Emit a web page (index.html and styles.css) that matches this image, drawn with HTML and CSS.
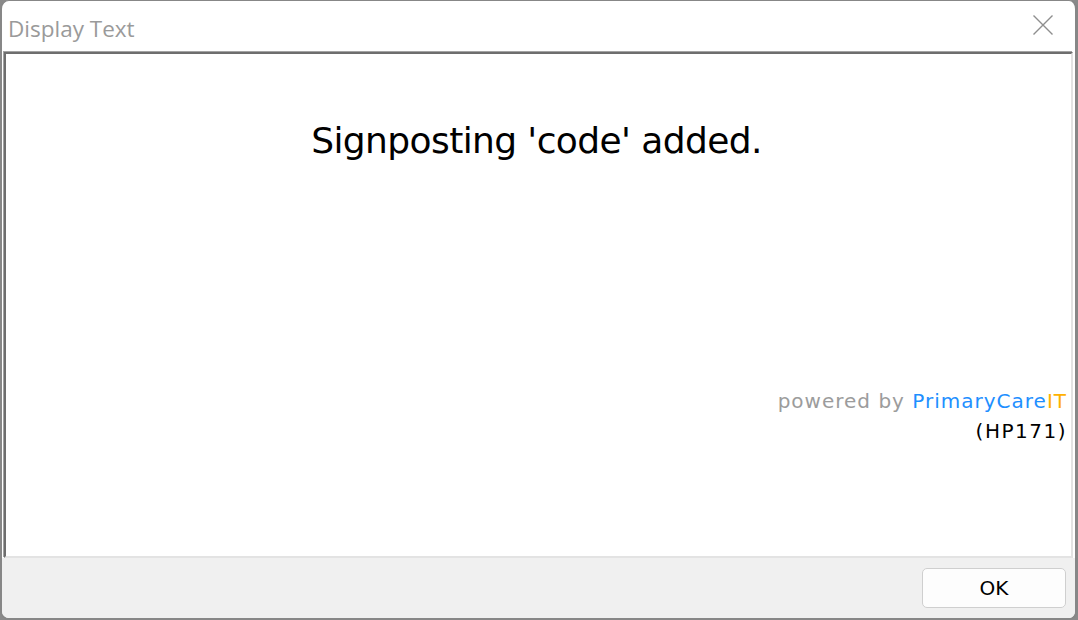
FILE: index.html
```html
<!DOCTYPE html>
<html>
<head>
<meta charset="utf-8">
<link rel="stylesheet" href="styles.css">
</head>
<body>
<div class="window">
  <div class="titlebar">
    <span class="title">Display Text</span>
    <svg class="close" width="20" height="20" viewBox="0 0 20 20"><path d="M0.5 0.5 L19.5 19.5 M19.5 0.5 L0.5 19.5" stroke="#8e8e8e" stroke-width="1.4" fill="none"/></svg>
  </div>
  <div class="panel">
    <div class="message">Signposting 'code' added.</div>
    <div class="powered">
      <div class="line">powered by <span class="brand">PrimaryCare</span><span class="it">IT</span></div>
      <div class="line code">(HP171)</div>
    </div>
  </div>
  <div class="footer">
    <button class="ok">OK</button>
  </div>
</div>
</body>
</html>
```

FILE: styles.css
```css
html, body {
  margin: 0;
  padding: 0;
}
body {
  width: 1078px;
  height: 620px;
  background: #8a8a8a;
  overflow: hidden;
}
.window {
  box-sizing: border-box;
  width: 1078px;
  height: 620px;
  border-style: solid;
  border-color: #878787;
  border-width: 1px 3px 2px 2px;
  border-radius: 9px;
  background: #ffffff;
  display: flex;
  flex-direction: column;
  overflow: hidden;
}
.titlebar {
  height: 51px;
  display: flex;
  align-items: center;
  justify-content: space-between;
  padding: 0 22px 0 6px;
}
.title {
  font-family: "Open Sans", "Noto Sans", sans-serif;
  font-size: 22.5px;
  color: #9a9a9a;
  margin-top: 4px;
}
.close {
  display: block;
  margin-top: -4px;
}
.panel {
  box-sizing: border-box;
  height: 506px;
  margin: 0 2px 0 2px;
  border-style: solid;
  border-width: 2px 2px 2px 2px;
  border-color: #6e6e6e #e3e3e3 #e3e3e3 #6e6e6e;
  box-shadow: -1px -1px 0 #a3a3a3;
  background: #ffffff;
  display: flex;
  flex-direction: column;
  justify-content: space-between;
  padding: 65px 4px 110px 0;
}
.message {
  font-family: "DejaVu Sans", sans-serif;
  font-size: 36px;
  letter-spacing: -0.6px;
  color: #000;
  text-align: center;
  line-height: 44px;
}
.powered {
  font-family: "DejaVu Sans", sans-serif;
  font-size: 20px;
  letter-spacing: 1px;
  text-align: right;
  line-height: 30px;
  color: #9c9c9c;
}
.brand { color: #1e8fff; }
.it { color: #ffb100; }
.code { color: #000; letter-spacing: 1.5px; }
.footer {
  flex: 1;
  background: #f0f0f0;
  display: flex;
  justify-content: flex-end;
  align-items: flex-start;
  padding: 10px 9px 0 0;
}
.ok {
  box-sizing: border-box;
  width: 144px;
  height: 40px;
  border: 1px solid #cfcfcf;
  border-radius: 5px;
  background: #fdfdfd;
  font-family: "DejaVu Sans", sans-serif;
  font-size: 20px;
  letter-spacing: 0;
  color: #000;
  padding: 0;
}
```
